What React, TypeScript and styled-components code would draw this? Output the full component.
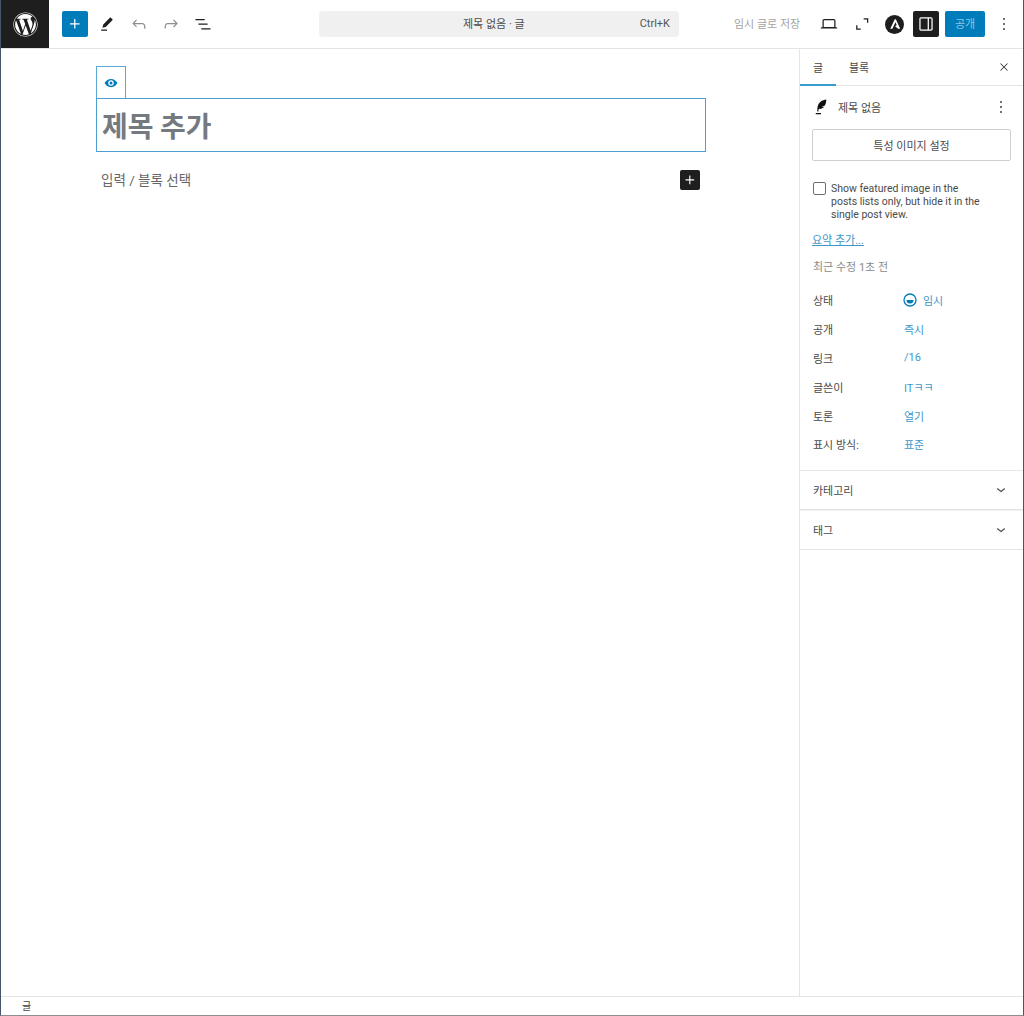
import React from 'react';
import styled, { createGlobalStyle } from 'styled-components';
import { FaWordpress } from 'react-icons/fa';

const GlobalStyle = createGlobalStyle`
  html, body {
    margin: 0;
    padding: 0;
    background: #fff;
  }
  body {
    font-family: Roboto, "Noto Sans CJK KR", sans-serif;
    color: #1e1e1e;
  }
  * {
    box-sizing: border-box;
  }
`;

const Frame = styled.div`
  width: 1024px;
  height: 1016px;
  display: flex;
  flex-direction: column;
  overflow: hidden;
  background: #fff;
  border-left: 1px solid #46566a;
  border-right: 1px solid #46566a;
  border-bottom: 1px solid #8a8f92;
`;

const Header = styled.header`
  height: 49px;
  flex: none;
  display: flex;
  align-items: center;
  border-bottom: 1px solid #e4e4e4;
`;

const Logo = styled.div`
  width: 48px;
  height: 48px;
  flex: none;
  background: #1e1e1e;
  color: #fff;
  display: flex;
  align-items: center;
  justify-content: center;
`;

const Tools = styled.div`
  width: 270px;
  flex: none;
  display: flex;
  align-items: center;
  padding-left: 13px;
`;

const IconButton = styled.span<{ $size?: number; $muted?: boolean; $variant?: 'primary' | 'dark' }>`
  width: ${(p) => p.$size ?? 32}px;
  height: ${(p) => p.$size ?? 32}px;
  flex: none;
  display: flex;
  align-items: center;
  justify-content: center;
  border-radius: 2px;
  color: ${(p) => (p.$variant ? '#fff' : p.$muted ? '#8f8f8f' : '#1e1e1e')};
  background: ${(p) => (p.$variant === 'primary' ? '#007cba' : p.$variant === 'dark' ? '#1e1e1e' : 'transparent')};
`;

const InserterSlot = styled.div`
  margin-right: 3px;
`;

const CommandBar = styled.div`
  width: 360px;
  height: 26px;
  flex: none;
  display: grid;
  grid-template-columns: 1fr auto;
  align-items: center;
  background: #f0f0f0;
  border-radius: 4px;
  padding: 0 9px 2px 144px;
  font-size: 11px;
  color: #4a4a4a;
`;

const CommandHint = styled.span`
  font-size: 11px;
  color: #555;
`;

const HeaderRight = styled.div`
  flex: 1;
  display: flex;
  align-items: center;
  padding-left: 55px;
`;

const SaveDraft = styled.span`
  width: 79px;
  flex: none;
  padding-bottom: 2px;
  font-size: 11px;
  color: #a3a3a3;
  white-space: nowrap;
`;

const ViewGroup = styled.div`
  display: flex;
  align-items: center;
  gap: 0.5px;
`;

const SidebarToggleSlot = styled.div`
  margin-left: 3px;
`;

const PublishButton = styled.span`
  width: 40px;
  height: 26px;
  margin-left: 6px;
  padding-bottom: 2px;
  flex: none;
  display: flex;
  align-items: center;
  justify-content: center;
  border-radius: 2px;
  background: #007cba;
  color: #8fc4e0;
  font-size: 11px;
`;

const MoreSlot = styled.div`
  margin-left: 3px;
`;

const Main = styled.div`
  flex: 1;
  min-height: 0;
  display: flex;
`;

const Canvas = styled.main`
  flex: 1;
  padding: 17px 0 0 95px;
`;

const BlockToolbar = styled.div`
  width: 30px;
  height: 33px;
  margin-bottom: -1px;
  display: flex;
  align-items: center;
  justify-content: center;
  border: 1px solid #5ba8d2;
  color: #007cba;
`;

const TitleBox = styled.h1`
  width: 610px;
  height: 54px;
  margin: 0;
  padding-left: 5px;
  display: flex;
  align-items: center;
  border: 1px solid #4d9fcd;
  font-family: "Noto Sans CJK KR", sans-serif;
  font-size: 28px;
  font-weight: 700;
  color: #757a80;
`;

const ParagraphRow = styled.div`
  width: 610px;
  height: 20px;
  margin-top: 18px;
  padding: 0 6px 0 5px;
  display: flex;
  align-items: center;
  justify-content: space-between;
  font-size: 13.5px;
  color: #666;
`;

const ParagraphHint = styled.span`
  padding-bottom: 2px;
`;

const Sidebar = styled.aside`
  width: 224px;
  flex: none;
  border-left: 1px solid #e4e4e4;
  display: flex;
  flex-direction: column;
`;

const Tabs = styled.div`
  height: 37px;
  flex: none;
  display: flex;
  align-items: stretch;
  border-bottom: 1px solid #e4e4e4;
`;

const Tab = styled.span<{ $active?: boolean }>`
  width: ${(p) => (p.$active ? 36 : 46)}px;
  margin-bottom: -1px;
  display: flex;
  align-items: center;
  justify-content: center;
  font-size: 11px;
  color: #4a4a4a;
  border-bottom: 2px solid ${(p) => (p.$active ? '#3a9bcf' : 'transparent')};
`;

const CloseSlot = styled.div`
  margin-left: auto;
  align-self: center;
  margin-right: 3px;
`;

const PostPanel = styled.section`
  padding: 5px 12px 0 12px;
  height: 385px;
  flex: none;
  border-bottom: 1px solid #e8e8e8;
`;

const PostTitleRow = styled.div`
  height: 32px;
  display: flex;
  align-items: center;
  font-size: 11px;
  color: #4a4a4a;
`;

const QuillSlot = styled.span`
  width: 26px;
  flex: none;
  display: flex;
  color: #111;
`;

const PostMore = styled.div`
  margin-left: auto;
  margin-right: -6px;
`;

const FeaturedButton = styled.div`
  width: 199px;
  height: 32px;
  margin-top: 6px;
  display: flex;
  align-items: center;
  justify-content: center;
  border: 1px solid #cfcfcf;
  border-radius: 2px;
  font-size: 11px;
  color: #4a4a4a;
`;

const CheckRow = styled.label`
  margin-top: 21px;
  display: flex;
  gap: 5px;
  padding-left: 1px;
  font-size: 10.5px;
  line-height: 13px;
  color: #4a4a4a;
`;

const CheckText = styled.span`
  width: 153px;
`;

const CheckBox = styled.span`
  width: 13px;
  height: 13px;
  flex: none;
  border: 1px solid #6f6f6f;
  border-radius: 2px;
`;

const ExcerptLink = styled.div`
  margin-top: 13px;
  font-size: 11px;
  line-height: 14px;
  color: #3d97c9;
  text-decoration: underline;
`;

const Modified = styled.div`
  margin-top: 13px;
  padding-left: 1px;
  font-size: 11px;
  line-height: 14px;
  color: #8a8a8a;
`;

const MetaList = styled.div`
  margin-top: 11px;
`;

const MetaRow = styled.div`
  height: 28.8px;
  padding-left: 1px;
  display: grid;
  grid-template-columns: 91px 1fr;
  align-items: center;
  font-size: 11px;
  color: #4a4a4a;
`;

const MetaValue = styled.span`
  display: flex;
  align-items: center;
  gap: 6px;
  color: #3d97c9;
`;

const StatusIcon = styled.svg`
  margin-left: -1px;
`;

const CollapsedPanel = styled.div`
  height: 39px;
  flex: none;
  padding: 0 13px 0 13px;
  display: flex;
  align-items: center;
  justify-content: space-between;
  border-bottom: 1px solid #e4e4e4;
  font-size: 11px;
  color: #4a4a4a;

  & + & {
    height: 40px;
    padding-bottom: 1px;
    border-top: 1px solid #efefef;
  }
`;

const Footer = styled.footer`
  height: 19px;
  flex: none;
  padding: 0 0 2px 21px;
  display: flex;
  align-items: center;
  border-top: 1px solid #e4e4e4;
  font-size: 10px;
  color: #444;
`;

const Icon: React.FC<{ d: string; size?: number }> = ({ d, size = 20 }) => (
  <svg width={size} height={size} viewBox="0 0 24 24" fill="currentColor" aria-hidden="true">
    <path d={d} />
  </svg>
);

const PLUS = 'M11 12.5V17.5H12.5V12.5H17.5V11H12.5V6H11V11H6V12.5H11Z';
const PEN = 'm19 7-3-3-8.5 8.5-1 4 4-1L19 7Zm-7 11.5H5V20h7v-1.5Z';
const UNDO = 'M18.3 11.7c-.6-.6-1.4-.9-2.3-.9H6.7l2.9-3.3-1.1-1-4.5 5L8.5 16l1-1-2.7-2.7H16c.5 0 .9.2 1.3.5 1 1 1 3.4 1 4.5v.3h1.5v-.2c0-1.5 0-4.3-1.5-5.7z';
const REDO = 'M15.6 6.5l-1.1 1 2.9 3.3H8c-.9 0-1.7.3-2.3.9-1.4 1.5-1.4 4.2-1.4 5.6v.2h1.5v-.3c0-1.1 0-3.5 1-4.5.3-.3.7-.5 1.3-.5h9.2L14.5 15l1.1 1.1 4.6-4.6-4.6-5z';
const LIST = 'M3 6h11v1.5H3V6Zm3.5 5.5h11V13h-11v-1.5ZM21 17H10v1.5h11V17Z';
const LAPTOP = 'M20.5 16h-.7V8c0-1.1-.9-2-2-2H6.2c-1.1 0-2 .9-2 2v8h-.7c-.8 0-1.5.7-1.5 1.5h20c0-.8-.7-1.5-1.5-1.5zM5.7 8c0-.3.2-.5.5-.5h11.6c.3 0 .5.2.5.5v7.6H5.7V8z';
const EXPAND = 'M14 5h5.5v5.5H18V6.500h-4V5ZM5 13.500h1.500v4h4V19H5v-5.500Z';
const SIDEBAR = 'M18 4H6c-1.1 0-2 .9-2 2v12c0 1.1.9 2 2 2h12c1.1 0 2-.9 2-2V6c0-1.1-.9-2-2-2ZM5.500 18V6c0-.3.2-.5.5-.5h8v13H6c-.3 0-.5-.2-.5-.5Zm13 0c0 .3-.2.5-.5.5h-2.500v-13H18c.3 0 .5.2.5.5v12Z';
const MORE = 'M13 19h-2v-2h2v2zm0-6h-2v-2h2v2zm0-6h-2V5h2v2z';
const CLOSE = 'm13.06 12 6.47-6.47-1.06-1.06L12 10.94 5.53 4.47 4.47 5.53 10.94 12l-6.47 6.47 1.06 1.06L12 13.06l6.47 6.47 1.06-1.06L13.06 12Z';
const CHEVRON = 'M17.5 10.6 12 15l-5.5-4.4.9-1.2L12 13l4.5-3.6 1 1.2z';
const EYE = 'M12 6.500c-4 0-7 2.600-8.600 5.500C5 14.900 8 17.500 12 17.500s7-2.600 8.600-5.500C19 9.100 16 6.500 12 6.500Zm0 9.200a3.700 3.700 0 1 1 0-7.400 3.700 3.700 0 0 1 0 7.400Zm0-1.700a2 2 0 1 0 0-4 2 2 0 0 0 0 4Z';
const QUILL = 'M5 20h7v1.500H5V20Zm14-18c-5.500.6-10 3.500-11.300 8.800-.5 2-.6 4.700-.6 7.200l1.400-.1c.1-1.200.3-2.500.7-3.500 2.500.5 5.200-.3 6.700-2.300-1.100.1-2.100 0-2.900-.3 1.700-.2 3.500-.9 4.500-2.400 1.100-2.100 1.500-4.700 1.500-7.400Z';

const App: React.FC = () => {
  const meta: Array<[string, string]> = [
    ['공개', '즉시'],
    ['링크', '/16'],
    ['글쓴이', 'ITㅋㅋ'],
    ['토론', '열기'],
    ['표시 방식:', '표준'],
  ];

  return (
    <Frame>
      <GlobalStyle />
      <Header>
        <Logo>
          <FaWordpress size={25} />
        </Logo>
        <Tools>
          <InserterSlot>
            <IconButton $size={26} $variant="primary">
              <Icon d={PLUS} />
            </IconButton>
          </InserterSlot>
          <IconButton><Icon d={PEN} /></IconButton>
          <IconButton $muted><Icon d={UNDO} /></IconButton>
          <IconButton $muted><Icon d={REDO} /></IconButton>
          <IconButton><Icon d={LIST} /></IconButton>
        </Tools>
        <CommandBar>
          <span>제목 없음 · 글</span>
          <CommandHint>Ctrl+K</CommandHint>
        </CommandBar>
        <HeaderRight>
          <SaveDraft>임시 글로 저장</SaveDraft>
          <ViewGroup>
            <IconButton><Icon d={LAPTOP} /></IconButton>
            <IconButton><Icon d={EXPAND} /></IconButton>
            <IconButton>
              <svg width="19" height="19" viewBox="0 0 20 20" aria-hidden="true">
                <circle cx="10" cy="10" r="10" fill="#1e1e1e" />
                <path d="M10.300 4.500 5.500 14.500h2.300l3.200-7 1.300 3-1.700 1.300 3.200 2.700h2.200L11.400 4.500Z" fill="#fff" />
              </svg>
            </IconButton>
          </ViewGroup>
          <SidebarToggleSlot>
            <IconButton $size={26} $variant="dark"><Icon d={SIDEBAR} /></IconButton>
          </SidebarToggleSlot>
          <PublishButton>공개</PublishButton>
          <MoreSlot>
            <IconButton><Icon d={MORE} /></IconButton>
          </MoreSlot>
        </HeaderRight>
      </Header>
      <Main>
        <Canvas>
          <BlockToolbar><Icon d={EYE} size={18} /></BlockToolbar>
          <TitleBox>제목 추가</TitleBox>
          <ParagraphRow>
            <ParagraphHint>입력 / 블록 선택</ParagraphHint>
            <IconButton $size={20} $variant="dark"><Icon d={PLUS} size={18} /></IconButton>
          </ParagraphRow>
        </Canvas>
        <Sidebar>
          <Tabs>
            <Tab $active>글</Tab>
            <Tab>블록</Tab>
            <CloseSlot>
              <IconButton><Icon d={CLOSE} size={12} /></IconButton>
            </CloseSlot>
          </Tabs>
          <PostPanel>
            <PostTitleRow>
              <QuillSlot><Icon d={QUILL} size={18} /></QuillSlot>
              제목 없음
              <PostMore>
                <IconButton><Icon d={MORE} /></IconButton>
              </PostMore>
            </PostTitleRow>
            <FeaturedButton>특성 이미지 설정</FeaturedButton>
            <CheckRow>
              <CheckBox />
              <CheckText>Show featured image in the posts lists only, but hide it in the single post view.</CheckText>
            </CheckRow>
            <ExcerptLink>요약 추가...</ExcerptLink>
            <Modified>최근 수정 1초 전</Modified>
            <MetaList>
              <MetaRow>
                <span>상태</span>
                <MetaValue>
                  <StatusIcon width="14" height="14" viewBox="0 0 14 14" aria-hidden="true">
                    <circle cx="7" cy="7" r="6" fill="none" stroke="#007cba" strokeWidth="1.300" />
                    <path d="M3.500 7h7a3.500 3.500 0 0 1-7 0Z" fill="#007cba" />
                  </StatusIcon>
                  임시
                </MetaValue>
              </MetaRow>
              {meta.map(([label, value]) => (
                <MetaRow key={label}>
                  <span>{label}</span>
                  <MetaValue>{value}</MetaValue>
                </MetaRow>
              ))}
            </MetaList>
          </PostPanel>
          <CollapsedPanel>
            카테고리
            <Icon d={CHEVRON} size={18} />
          </CollapsedPanel>
          <CollapsedPanel>
            태그
            <Icon d={CHEVRON} size={18} />
          </CollapsedPanel>
        </Sidebar>
      </Main>
      <Footer>글</Footer>
    </Frame>
  );
};

export default App;
